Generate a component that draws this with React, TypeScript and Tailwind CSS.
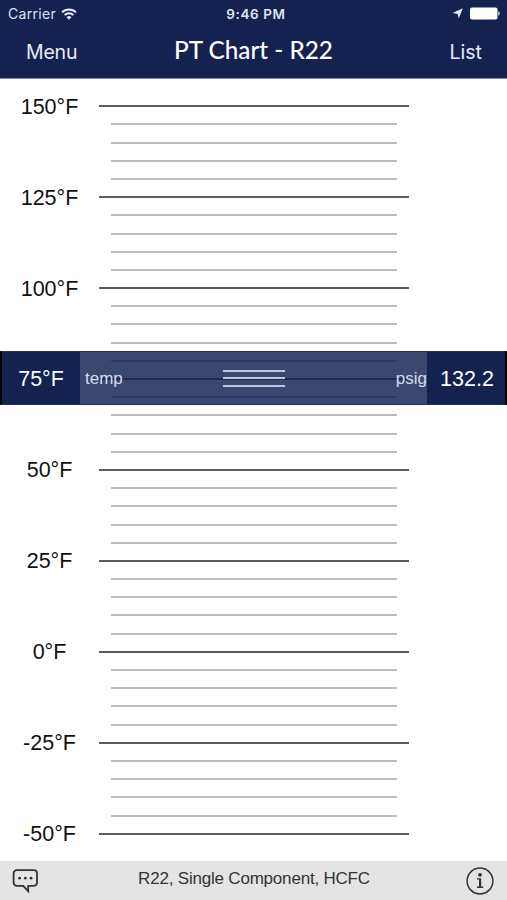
import React, { useState } from 'react'
import clsx from 'clsx'

const MAX_TEMP = 150
const MIN_TEMP = -50
const STEP = 5

const ticks = Array.from({ length: (MAX_TEMP - MIN_TEMP) / STEP + 1 }, (_, i) => MAX_TEMP - i * STEP)

function WifiIcon() {
  return (
    <svg className="h-[12px] w-[16px]" viewBox="0 0 16 12" fill="none" stroke="#e9eefa" strokeWidth="1.9">
      <path d="M1 4.3a10 10 0 0 1 14 0" />
      <path d="M3.6 7a6.3 6.3 0 0 1 8.8 0" />
      <path d="M8 11.8 5.6 9.2a3.5 3.5 0 0 1 4.8 0z" fill="#e9eefa" stroke="none" />
    </svg>
  )
}

function StatusBar() {
  return (
    <div className="relative flex h-[27px] items-center justify-between pl-[8px] pr-[7px] text-[#dfe5f5]">
      <div className="flex items-center gap-[5px]">
        <span className="font-['Inter'] text-[14px] tracking-[0.3px]">Carrier</span>
        <WifiIcon />
      </div>
      <span className="absolute inset-x-0 top-[4px] pl-[5px] text-center font-['Inter'] text-[13.5px] font-semibold tracking-[0.6px]">9:46 PM</span>
      <div className="flex items-center gap-[7px]">
        <svg className="h-[11px] w-[11px]" viewBox="0 0 11 11">
          <path d="M10.8 .2 6.8 10.3 5.600 5.900 .7 5.100z" fill="#e9eefa" />
        </svg>
        <svg className="h-[13px] w-[30px]" viewBox="0 0 30 13">
          <rect x="0" y=".5" width="27.5" height="12" rx="2" fill="#fff" />
          <path d="M28.4 4.3c1.6.6 1.6 3.8 0 4.4z" fill="#fff" />
        </svg>
      </div>
    </div>
  )
}

function Header() {
  return (
    <header className="h-[79px] border-b border-[#7f8aa8] bg-[#14224f]">
      <StatusBar />
      <div className="relative flex h-[51px] items-center justify-between pt-[1px] pl-[26px] pr-[25px] font-['Inter'] text-[19.5px] text-[#e6ebf7]">
        <button className="tracking-[-0.2px]">Menu</button>
        <h1 className="absolute inset-x-[100px] bottom-[12px] text-center font-['Lato'] text-[24.3px] leading-[32px] font-medium text-white">PT Chart - R22</h1>
        <button>List</button>
      </div>
    </header>
  )
}

function Tick({ temp, selected }: { temp: number; selected: boolean }) {
  const major = temp % 25 === 0
  return (
    <div className="flex h-[18.2px] items-center">
      <div className="w-[99px] pt-[1px] text-center text-[21.5px] leading-[18px] text-[#111]">
        {major && !selected && `${temp}°F`}
      </div>
      <div className="flex w-[310px] justify-center">
        <div className={clsx('h-[2px]', major ? 'w-[310px] bg-[#5c5c5c]' : 'w-[286px] bg-[#bcbcbc]')} />
      </div>
    </div>
  )
}

function Slider({ temp, pressure }: { temp: number; pressure: string }) {
  return (
    <div className="absolute inset-x-0 top-[272px] flex h-[54px] border-x-2 border-y border-x-black border-y-[#2a3040] text-white">
      <div className="flex w-[78px] items-center justify-center bg-[#14224f] pt-[2px] text-[21.5px]">{temp}°F</div>
      <div className="relative flex flex-1 items-center justify-between bg-[#0c1e4f]/81 pl-[5px] text-[17px] text-[#d5dcee]">
        <span className="pt-[2px]">temp</span>
        <div className="absolute left-[143px] flex w-[62px] flex-col gap-[5.5px]">
          <div className="h-[2px] bg-[#bcc4de]" />
          <div className="h-[2px] bg-[#bcc4de]" />
          <div className="h-[2px] bg-[#bcc4de]" />
        </div>
        <span className="pt-[2px]">psig</span>
      </div>
      <div className="flex w-[78px] items-center justify-center bg-[#14224f] pt-[2px] pl-[2px] text-[21.5px]">{pressure}</div>
    </div>
  )
}

function Footer() {
  return (
    <footer className="flex h-[39px] items-center justify-between bg-[#e4e4e4] pl-[12px] pr-[13px] text-[#333]">
      <svg className="h-[26px] w-[27px]" viewBox="0 0 27 26" fill="none" stroke="#333" strokeWidth="1.8">
        <path d="M4.8 2.2h17a3.2 3.2 0 0 1 3.2 3.2v9.2a3.2 3.2 0 0 1-3.2 3.2h-5.6v5.4l-5-5.4H4.8a3.2 3.2 0 0 1-3.2-3.2V5.4a3.2 3.2 0 0 1 3.2-3.2z" />
        <g fill="#333" stroke="none">
          <circle cx="7.6" cy="10.2" r="1.4" />
          <circle cx="13.3" cy="10.2" r="1.4" />
          <circle cx="19" cy="10.2" r="1.4" />
        </g>
      </svg>
      <span className="pb-[4px] pl-[3px] text-[17px] tracking-[-0.2px]">R22, Single Component, HCFC</span>
      <svg className="h-[28px] w-[28px]" viewBox="0 0 28 28" fill="none" stroke="#333" strokeWidth="1.5">
        <circle cx="14" cy="14" r="12.9" />
        <circle cx="14" cy="7.8" r="1.9" fill="#333" stroke="none" />
        <path d="M11 11.2h4.2v8.4h2v1.4H11v-1.4h2v-7H11z" fill="#333" stroke="none" />
      </svg>
    </footer>
  )
}

export default function App() {
  const [temp] = useState(75)

  return (
    <div className="flex h-[900px] w-[507px] flex-col overflow-hidden bg-white font-['Liberation_Sans',sans-serif]">
      <Header />
      <main className="relative flex-1 pt-[18.1px]">
        {ticks.map((t) => (
          <Tick key={t} temp={t} selected={t === temp} />
        ))}
        <Slider temp={temp} pressure="132.2" />
      </main>
      <Footer />
    </div>
  )
}
